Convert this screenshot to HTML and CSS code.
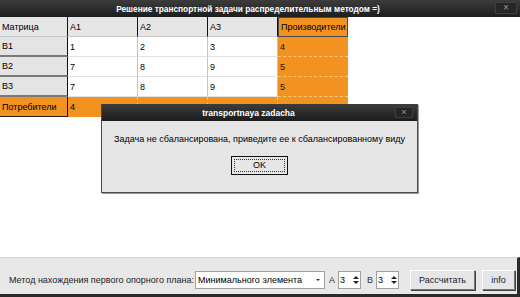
FILE: index.html
```html
<!DOCTYPE html>
<html lang="ru">
<head>
	<meta charset="UTF-8">
	<title>Решение транспортной задачи</title>
	<link rel="stylesheet" href="styles.css">
</head>
<body>
	<div class="window">
		<div class="titlebar">
			<span class="title">Решение транспортной задачи распределительным методом =)</span>
			<span class="close">×</span>
		</div>
		<div class="content">
			<table class="matrix">
				<colgroup>
					<col class="c-head"><col class="c-cell"><col class="c-cell"><col class="c-cell"><col class="c-cell">
				</colgroup>
				<tr class="top">
					<th class="corner">Матрица</th>
					<th class="col">A1</th>
					<th class="col">A2</th>
					<th class="col">A3</th>
					<th class="prod">Производители</th>
				</tr>
				<tr>
					<th class="row">B1</th><td>1</td><td>2</td><td>3</td><td class="supply">4</td>
				</tr>
				<tr>
					<th class="row">B2</th><td>7</td><td>8</td><td>9</td><td class="supply">5</td>
				</tr>
				<tr>
					<th class="row">B3</th><td>7</td><td>8</td><td>9</td><td class="supply">5</td>
				</tr>
				<tr class="demand">
					<th class="row">Потребители</th><td>4</td><td>4</td><td>5</td><td class="last"></td>
				</tr>
			</table>

			<div class="dialog">
				<div class="dlg-title">
					<span>transportnaya zadacha</span>
					<span class="dlg-close">×</span>
				</div>
				<div class="dlg-body">
					<p class="message">Задача не сбалансирована, приведите ее к сбалансированному виду</p>
					<button class="ok"><span>OK</span></button>
				</div>
			</div>
		</div>
		<div class="panel">
			<span class="label">Метод нахождения первого опорного плана:</span>
			<div class="select">
				<span class="value">Минимального элемента</span>
				<span class="drop"></span>
			</div>
			<span class="letter">A</span>
			<div class="spin"><span class="num">3</span><span class="arrows"><i class="up"></i><i class="down"></i></span></div>
			<span class="letter b">B</span>
			<div class="spin"><span class="num">3</span><span class="arrows"><i class="up"></i><i class="down"></i></span></div>
			<button class="btn calc">Рассчитать</button>
			<button class="btn info">info</button>
		</div>
	</div>
</body>
</html>
```

FILE: styles.css
```css
*{padding:0;margin:0;box-sizing:border-box;}
body{background:#fff;}
.window{width:520px;height:297px;display:flex;flex-direction:column;font-family:"Liberation Sans",Arial,sans-serif;font-size:9px;color:#000;overflow:hidden;}

/* заголовок окна */
.titlebar{height:17px;flex:none;background:linear-gradient(#3c3c3c,#1e1e1e);color:#fff;font-weight:bold;font-size:8.3px;display:flex;align-items:center;justify-content:center;padding-right:24px;position:relative;}
.titlebar .close{position:absolute;right:3px;top:2px;width:22px;height:12px;background:#262626;border:1px solid #3e3e3e;color:#9a9a9a;font-weight:normal;font-size:10px;line-height:10px;text-align:center;}

/* таблица */
.content{flex:1;background:#fff;position:relative;}
.matrix{border-collapse:separate;border-spacing:0;table-layout:fixed;width:347px;}
.c-head{width:68px;}
.c-cell{width:70px;}
.matrix th,.matrix td{height:20px;padding:0 2px;text-align:left;font-weight:normal;font-size:9px;white-space:nowrap;overflow:hidden;}
.matrix td{border-right:1px solid #c4c4c4;border-bottom:1px solid #e2e2e2;background:#fff;}
.matrix th.corner,.matrix th.col{background:#e6e6e6;border-right:1px solid #111;border-bottom:1px solid #c8c8c8;}
.matrix th.row{background:#e4e4e4;border-right:1px solid #111;border-bottom:2px solid #7a7a7a;}
.matrix th.prod{background:#f29221;border:1px solid #4a4a4a;}
.matrix td.supply{background:#f29221;color:#2a0c00;border-right:none;border-bottom:1px dashed #f8c878;}
.demand th.row,.demand td{background:#f29221;}
.demand th.row{border-bottom:1px solid #222;}
.demand td{border-right:1px dashed #f8c878;border-bottom:none;}
.demand td.last{border-right:none;}

/* диалог */
.dialog{position:absolute;left:101px;top:87px;width:317px;height:89px;background:#e6e6e6;border:1px solid #4a4a4a;border-top:none;box-shadow:1px 1px 0 #9a9a9a;display:flex;flex-direction:column;}
.dlg-title{height:17px;flex:none;background:linear-gradient(#3c3c3c,#1c1c1c);color:#fff;font-weight:bold;font-size:8.5px;display:flex;align-items:center;justify-content:center;padding-right:22px;position:relative;}
.dlg-close{position:absolute;right:4px;top:3px;width:18px;height:11px;background:#262626;border:1px solid #3c3c3c;color:#999;font-weight:normal;font-size:9px;line-height:9px;text-align:center;}
.dlg-body{flex:1;display:flex;flex-direction:column;align-items:center;padding-top:13px;}
.message{font-size:9px;line-height:11px;}
.ok{margin-top:11px;width:57px;height:19px;background:#e6e6e6;border:1px solid #111;font-family:inherit;font-size:9px;padding:2px;}
.ok span{display:block;height:100%;border:1px dotted #333;line-height:11px;}

/* нижняя панель */
.panel{height:40px;flex:none;background:#e8e8e8;border-top:1px solid #d2d2d2;border-bottom:3px solid #2a2a2a;border-right:3px solid #2a2a2a;display:flex;align-items:center;padding:10px 0 2px 9px;}
.label{margin-right:1px;color:#222;white-space:nowrap;}
.select{width:130px;height:18px;background:#fff;border:1px solid #a0a0a0;display:flex;align-items:center;padding-left:2px;white-space:nowrap;}
.select .value{flex:1;}
.select .drop{width:12px;height:14px;position:relative;}
.select .drop:after{content:"";position:absolute;left:4px;top:6px;border-left:2px solid transparent;border-right:2px solid transparent;border-top:2px solid #333;}
.letter{margin:0 3px 0 4px;color:#333;}
.letter.b{margin-left:6px;}
.spin{width:23px;height:18px;background:#fff;border:1px solid #a0a0a0;display:flex;align-items:center;padding-left:1px;}
.spin .num{flex:1;}
.spin .arrows{width:9px;display:flex;flex-direction:column;gap:2px;align-items:center;}
.spin i{display:block;border-left:3px solid transparent;border-right:3px solid transparent;}
.spin .up{border-bottom:3px solid #222;}
.spin .down{border-top:3px solid #222;}
.btn{height:20px;background:#e6e6e6;border:1px solid;border-color:#fff #7a7a7a #7a7a7a #fff;box-shadow:1px 1px 0 #404040;font-family:inherit;font-size:9px;color:#222;}
.calc{width:65px;margin-left:11px;}
.info{width:33px;margin-left:7px;}
```
